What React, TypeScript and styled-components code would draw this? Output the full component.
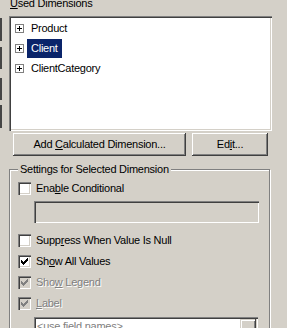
import React from "react";
import styled, { createGlobalStyle } from "styled-components";

const GlobalStyle = createGlobalStyle`
  html, body {
    margin: 0;
    padding: 0;
    background: #d4d0c8;
  }
  body {
    font-family: "Liberation Sans", Arial, sans-serif;
    font-size: 11px;
    color: #000;
  }
`;

const Window = styled.div`
  width: 287px;
  height: 328px;
  overflow: hidden;
  display: flex;
  align-items: flex-start;
  background: #d4d0c8;
  font-family: "Liberation Sans", Arial, sans-serif;
  font-size: 11px;
  letter-spacing: -0.25px;
  line-height: 13px;
`;

const EdgeStrip = styled.div`
  width: 9px;
  flex: none;
  display: flex;
  flex-direction: column;
`;

const EdgeBar = styled.div<{ $top: number; $h: number }>`
  width: 2px;
  flex: none;
  height: ${(p) => p.$h}px;
  margin-top: ${(p) => p.$top}px;
  background: #454545;
`;

const Main = styled.div`
  width: 263px;
  flex: none;
  display: flex;
  flex-direction: column;
  & > * {
    flex: none;
  }
`;

const Caption = styled.div`
  margin-top: -3px;
  height: 13px;
  padding-left: 1px;
  white-space: nowrap;
`;

const Key = styled.u`
  text-underline-offset: 1px;
`;

const ListBox = styled.div`
  margin-top: 6px;
  height: 115px;
  box-sizing: border-box;
  padding: 2px 2px 2px 2px;
  background: #fff;
  box-shadow: inset 1px 1px 0 #808080, inset 2px 2px 0 #404040,
    inset -1px -1px 0 #fff, inset -2px -2px 0 #d4d0c8;
`;

const TreeRow = styled.div`
  display: flex;
  align-items: center;
  height: 20px;
  padding-left: 4px;
`;

const Expander = styled.svg`
  width: 9px;
  height: 9px;
  flex: none;
  display: block;
`;

const ItemLabel = styled.span<{ $selected?: boolean }>`
  margin-left: 3px;
  padding: 0 4px;
  height: 19px;
  line-height: 19px;
  white-space: nowrap;
  background: ${(p) => (p.$selected ? "#0a246a" : "transparent")};
  color: ${(p) => (p.$selected ? "#fff" : "#000")};
`;

const ButtonRow = styled.div`
  display: flex;
  gap: 6px;
  margin-top: 2px;
  padding-left: 4px;
`;

const Button = styled.div<{ $w: number }>`
  width: ${(p) => p.$w}px;
  height: 23px;
  box-sizing: border-box;
  display: flex;
  align-items: center;
  justify-content: center;
  white-space: nowrap;
  background: #d4d0c8;
  box-shadow: inset -1px -1px 0 #404040, inset 1px 1px 0 #fff,
    inset -2px -2px 0 #808080;
`;

const GroupBox = styled.div`
  position: relative;
  margin-top: 13px;
  width: 261px;
  height: 180px;
  box-sizing: border-box;
  border: 1px solid #808080;
  box-shadow: inset 1px 1px 0 #fff, 1px 1px 0 #fff;
  padding: 8px 0 0 8px;
  display: flex;
  flex-direction: column;
  & > * {
    flex: none;
  }
`;

const GroupTitle = styled.span`
  position: absolute;
  top: -7px;
  left: 8px;
  padding: 0 2px;
  background: #d4d0c8;
  white-space: nowrap;
`;

const CheckRow = styled.div<{ $mt?: number }>`
  display: flex;
  align-items: center;
  gap: 5px;
  height: 21px;
  margin-top: ${(p) => p.$mt ?? 0}px;
`;

const CheckBox = styled.div<{ $disabled?: boolean }>`
  width: 13px;
  height: 13px;
  flex: none;
  box-sizing: border-box;
  padding: 3px;
  background: ${(p) => (p.$disabled ? "#d4d0c8" : "#fff")};
  box-shadow: inset 1px 1px 0 #808080, inset 2px 2px 0 #404040,
    inset -1px -1px 0 #fff, inset -2px -2px 0 #d4d0c8;
`;

const CheckMark = styled.svg`
  width: 7px;
  height: 7px;
  display: block;
`;

const CheckText = styled.span<{ $disabled?: boolean }>`
  white-space: nowrap;
  color: ${(p) => (p.$disabled ? "#808080" : "#000")};
  text-shadow: ${(p) => (p.$disabled ? "1px 1px 0 #fff" : "none")};
`;

const TextField = styled.div`
  margin: 2px 0 0 16px;
  width: 225px;
  height: 22px;
  box-sizing: border-box;
  background: #d4d0c8;
  box-shadow: inset 1px 1px 0 #808080, inset 2px 2px 0 #404040,
    inset -1px -1px 0 #fff, inset -2px -2px 0 #d4d0c8;
`;

const Combo = styled.div`
  margin: 3px 0 0 16px;
  width: 224px;
  height: 21px;
  box-sizing: border-box;
  padding: 2px;
  display: flex;
  background: #fff;
  box-shadow: inset 1px 1px 0 #808080, inset 2px 2px 0 #404040,
    inset -1px -1px 0 #fff, inset -2px -2px 0 #d4d0c8;
`;

const ComboText = styled.span`
  flex: 1;
  padding-left: 1px;
  line-height: 15px;
  color: #808080;
  white-space: nowrap;
`;

const ComboButton = styled.div`
  width: 16px;
  flex: none;
  background: #d4d0c8;
  box-shadow: inset -1px -1px 0 #404040, inset 1px 1px 0 #d4d0c8,
    inset 2px 2px 0 #fff, inset -2px -2px 0 #808080;
`;

const PlusIcon = () => (
  <Expander viewBox="0 0 9 9" shapeRendering="crispEdges">
    <rect x="0.5" y="0.5" width="8" height="8" fill="#fff" stroke="#808080" />
    <path d="M2 4h5v1H2z M4 2h1v5H4z" fill="#000" />
  </Expander>
);

const Check = ({ color }: { color: string }) => (
  <CheckMark viewBox="0 0 7 7" shapeRendering="crispEdges">
    <path
      d="M0 2h1v3H0z M1 3h1v3H1z M2 4h1v3H2z M3 3h1v3H3z M4 2h1v3H4z M5 1h1v3H5z M6 0h1v3H6z"
      fill={color}
    />
  </CheckMark>
);

type CheckItemProps = {
  checked?: boolean;
  disabled?: boolean;
  mt?: number;
  children: React.ReactNode;
};

const CheckItem = ({ checked, disabled, mt, children }: CheckItemProps) => (
  <CheckRow $mt={mt}>
    <CheckBox $disabled={disabled}>
      {checked && <Check color={disabled ? "#808080" : "#000"} />}
    </CheckBox>
    <CheckText $disabled={disabled}>{children}</CheckText>
  </CheckRow>
);

const dimensions = ["Product", "Client", "ClientCategory"];
const edgeBars = [
  { top: 18, h: 23 },
  { top: 6, h: 22 },
  { top: 9, h: 22 },
  { top: 5, h: 23 },
];

export default function App() {
  return (
    <>
      <GlobalStyle />
      <Window>
        <EdgeStrip>
          {edgeBars.map((b, i) => (
            <EdgeBar key={i} $top={b.top} $h={b.h} />
          ))}
        </EdgeStrip>
        <Main>
          <Caption>
            <Key>U</Key>sed Dimensions
          </Caption>
          <ListBox>
            {dimensions.map((d) => (
              <TreeRow key={d}>
                <PlusIcon />
                <ItemLabel $selected={d === "Client"}>{d}</ItemLabel>
              </TreeRow>
            ))}
          </ListBox>
          <ButtonRow>
            <Button $w={173}>
              Add&nbsp;<Key>C</Key>alculated Dimension...
            </Button>
            <Button $w={76}>
              Ed<Key>i</Key>t...
            </Button>
          </ButtonRow>
          <GroupBox>
            <GroupTitle>Settings for Selected Dimension</GroupTitle>
            <CheckItem>
              Ena<Key>b</Key>le Conditional
            </CheckItem>
            <TextField />
            <CheckItem mt={7}>
              Supp<Key>r</Key>ess When Value Is Null
            </CheckItem>
            <CheckItem checked>
              Sh<Key>o</Key>w All Values
            </CheckItem>
            <CheckItem checked disabled>
              Sho<Key>w</Key> Legend
            </CheckItem>
            <CheckItem checked disabled>
              <Key>L</Key>abel
            </CheckItem>
            <Combo>
              <ComboText>&lt;use field names&gt;</ComboText>
              <ComboButton />
            </Combo>
          </GroupBox>
        </Main>
      </Window>
    </>
  );
}
